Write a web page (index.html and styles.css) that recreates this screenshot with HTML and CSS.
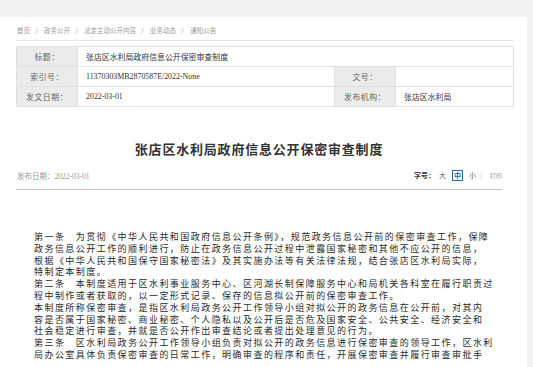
FILE: index.html
```html
<!DOCTYPE html>
<html lang="zh-CN">
<head>
  <meta charset="UTF-8" />
  <meta name="viewport" content="width=device-width, initial-scale=1.0"/>
  <title>张店区水利局政府信息公开保密审查制度</title>
  <link rel="stylesheet" href="styles.css">
</head>
<body>

<div class="topbar"></div>

<div class="page">
  <div class="crumbs">
    <a href="#">首页</a><span class="sep">/</span>
    <a href="#">政务公开</a><span class="sep">/</span>
    <a href="#">法定主动公开内容</a><span class="sep">/</span>
    <a href="#">业务动态</a><span class="sep">/</span>
    <a href="#">通知公告</a>
  </div>

  <table class="info">
    <tr>
      <th>标题：</th>
      <td colspan="3">张店区水利局政府信息公开保密审查制度</td>
    </tr>
    <tr>
      <th>索引号：</th>
      <td class="num">11370303MB2870587E/2022-None</td>
      <th>文号：</th>
      <td></td>
    </tr>
    <tr>
      <th>发文日期：</th>
      <td class="num">2022-03-01</td>
      <th>发布机构：</th>
      <td>张店区水利局</td>
    </tr>
  </table>

  <h1 class="title">张店区水利局政府信息公开保密审查制度</h1>

  <div class="meta">
    <div class="date">发布日期：<span class="num">2022-03-01</span></div>
    <div class="tools">
      <b>字号：</b>
      <a href="#">大</a>
      <a href="#" class="on">中</a>
      <a href="#">小</a>
      <span class="bar">|</span>
      <a href="#" class="print">打印</a>
    </div>
  </div>

  <div class="article">
    <p>第一条　为贯彻《中华人民共和国政府信息公开条例》，规范政务信息公开前的保密审查工作，保障<br>政务信息公开工作的顺利进行，防止在政务信息公开过程中泄露国家秘密和其他不应公开的信息，<br>根据《中华人民共和国保守国家秘密法》及其实施办法等有关法律法规，结合张店区水利局实际，<br>特制定本制度。</p>
    <p>第二条　本制度适用于区水利事业服务中心、区河湖长制保障服务中心和局机关各科室在履行职责过<br>程中制作或者获取的，以一定形式记录、保存的信息拟公开前的保密审查工作。</p>
    <p>本制度所称保密审查，是指区水利局政务公开工作领导小组对拟公开的政务信息在公开前，对其内<br>容是否属于国家秘密、商业秘密、个人隐私以及公开后是否危及国家安全、公共安全、经济安全和<br>社会稳定进行审查，并就是否公开作出审查结论或者提出处理意见的行为。</p>
    <p>第三条　区水利局政务公开工作领导小组负责对拟公开的政务信息进行保密审查的领导工作，区水利<br>局办公室具体负责保密审查的日常工作，明确审查的程序和责任，开展保密审查并履行审查审批手</p>
  </div>
</div>

</body>
</html>
```

FILE: styles.css
```css
body {
  margin: 0;
  background: #f2f2f2;
  font-family: "Noto Sans CJK SC", "Noto Sans", sans-serif;
  color: #333;
}
a {
  color: inherit;
  text-decoration: none;
}
.topbar {
  height: 17px;
}
.page {
  width: 527px;
  height: 350px;
  background: #fff;
  padding: 0 13px 0 16px;
  box-sizing: border-box;
  overflow: hidden;
}
.crumbs {
  height: 23px;
  line-height: 26px;
  font-size: 6.5px;
  color: #999;
  padding-left: 1px;
  border-bottom: 1px solid #e6e6e6;
}
.crumbs .sep {
  margin: 0 5px;
}
.info {
  margin-top: 5px;
  width: 498px;
  border-collapse: collapse;
  font-size: 7.9px;
}
.info th,
.info td {
  height: 19px;
  padding: 0;
  border: 1px solid #e0e0e0;
}
.info th {
  width: 60px;
  background: #ebebeb;
  color: #666;
  font-weight: normal;
  text-align: center;
  letter-spacing: 0.5px;
}
.info td {
  padding-left: 8px;
  color: #333;
}
.info td:nth-child(2) {
  width: 248px;
}
.num {
  font-family: "Liberation Serif", serif;
}
.title {
  margin: 32px 0 0;
  text-align: center;
  font-size: 13px;
  line-height: 20px;
  letter-spacing: 0.8px;
  font-weight: bold;
  color: #333;
  padding-right: 12px;
}
.meta {
  display: flex;
  justify-content: space-between;
  align-items: center;
  margin-top: 10px;
  width: 486px;
  height: 12px;
  padding-bottom: 8px;
  border-bottom: 1px solid #c4c4c4;
  font-size: 7px;
}
.date {
  color: #999;
  padding-left: 1px;
  font-size: 7.5px;
}
.tools {
  display: flex;
  align-items: center;
  gap: 6px;
  color: #666;
}
.tools b {
  color: #333;
  margin-right: -2px;
}
.tools .on {
  color: #2b68b1;
  border: 1px solid #2b68b1;
  padding: 0 1px;
  line-height: 9px;
  font-weight: bold;
}
.tools .bar {
  color: #bbb;
  margin: 0 2px 0 -2px;
}
.tools .print {
  color: #999;
  font-size: 6px;
}
.article {
  margin-top: 41px;
  padding-left: 18px;
  font-size: 9px;
  line-height: 11.8px;
  letter-spacing: 1.45px;
  white-space: nowrap;
  color: #2a2a2a;
}
.article p {
  margin: 0;
}
```
